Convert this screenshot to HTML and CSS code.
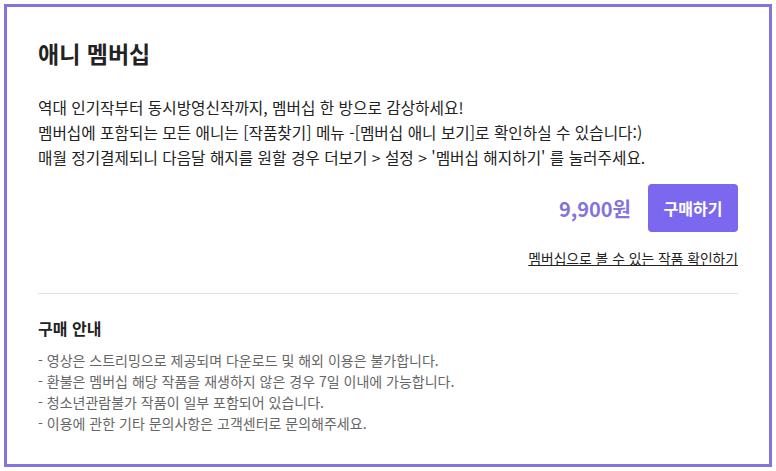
FILE: index.html
```html
<!DOCTYPE html>
<html lang="ko">
<head>
  <meta charset="UTF-8">
  <meta name="viewport" content="width=device-width, initial-scale=1.0">
  <title>애니 멤버십</title>
  <link rel="stylesheet" href="styles.css">
</head>
<body>
  <div class="membership">
    <h1 class="title">애니 멤버십</h1>
    <p class="desc">
      역대 인기작부터 동시방영신작까지, 멤버십 한 방으로 감상하세요!<br>
      멤버십에 포함되는 모든 애니는 [작품찾기] 메뉴 -[멤버십 애니 보기]로 확인하실 수 있습니다:)<br>
      매월 정기결제되니 다음달 해지를 원할 경우 더보기 &gt; 설정 &gt; '멤버십 해지하기' 를 눌러주세요.
    </p>
    <div class="buy-row">
      <span class="price">9,900원</span>
      <div class="buy-btn">구매하기</div>
    </div>
    <div class="link-row">
      <a class="works-link" href="#">멤버십으로 볼 수 있는 작품 확인하기</a>
    </div>
    <hr class="line">
    <h2 class="guide-title">구매 안내</h2>
    <ul class="guide">
      <li>- 영상은 스트리밍으로 제공되며 다운로드 및 해외 이용은 불가합니다.</li>
      <li>- 환불은 멤버십 해당 작품을 재생하지 않은 경우 7일 이내에 가능합니다.</li>
      <li>- 청소년관람불가 작품이 일부 포함되어 있습니다.</li>
      <li>- 이용에 관한 기타 문의사항은 고객센터로 문의해주세요.</li>
    </ul>
  </div>
</body>
</html>
```

FILE: styles.css
```css
*{
  margin: 0;
  padding: 0;
  box-sizing: border-box;
}
body{
  background-color: #fff;
  font-family: "Noto Sans CJK KR", "Noto Sans", sans-serif;
  color: #222;
}
.membership{
  margin: 4px;
  height: calc(100vh - 8px);
  border: 3px solid #8474db;
  padding: 31px 31px 0 31px;
}
.title{
  font-size: 23px;
  font-weight: 700;
  line-height: 31px;
}
.desc{
  margin-top: 26px;
  font-size: 15.7px;
  line-height: 25px;
  color: #222;
}
.buy-row{
  margin-top: 14px;
  display: flex;
  justify-content: flex-end;
  align-items: center;
  gap: 17px;
}
.price{
  font-size: 20px;
  font-weight: 700;
  color: #8473dc;
}
.buy-btn{
  width: 90px;
  height: 48px;
  line-height: 48px;
  text-align: center;
  background-color: #7c68ee;
  border-radius: 4px;
  color: #fff;
  font-size: 16px;
  font-weight: 700;
  cursor: pointer;
}
.link-row{
  margin-top: 15px;
  text-align: right;
  line-height: 20px;
}
.works-link{
  font-size: 13.8px;
  color: #222;
  text-decoration: underline;
}
.line{
  margin-top: 25px;
  border: 0;
  border-top: 1px solid #e2e2e2;
}
.guide-title{
  margin-top: 23px;
  font-size: 16px;
  font-weight: 700;
  line-height: 22px;
}
.guide{
  margin-top: 11px;
  list-style: none;
  font-size: 14px;
  line-height: 21px;
  color: #666;
}
```
